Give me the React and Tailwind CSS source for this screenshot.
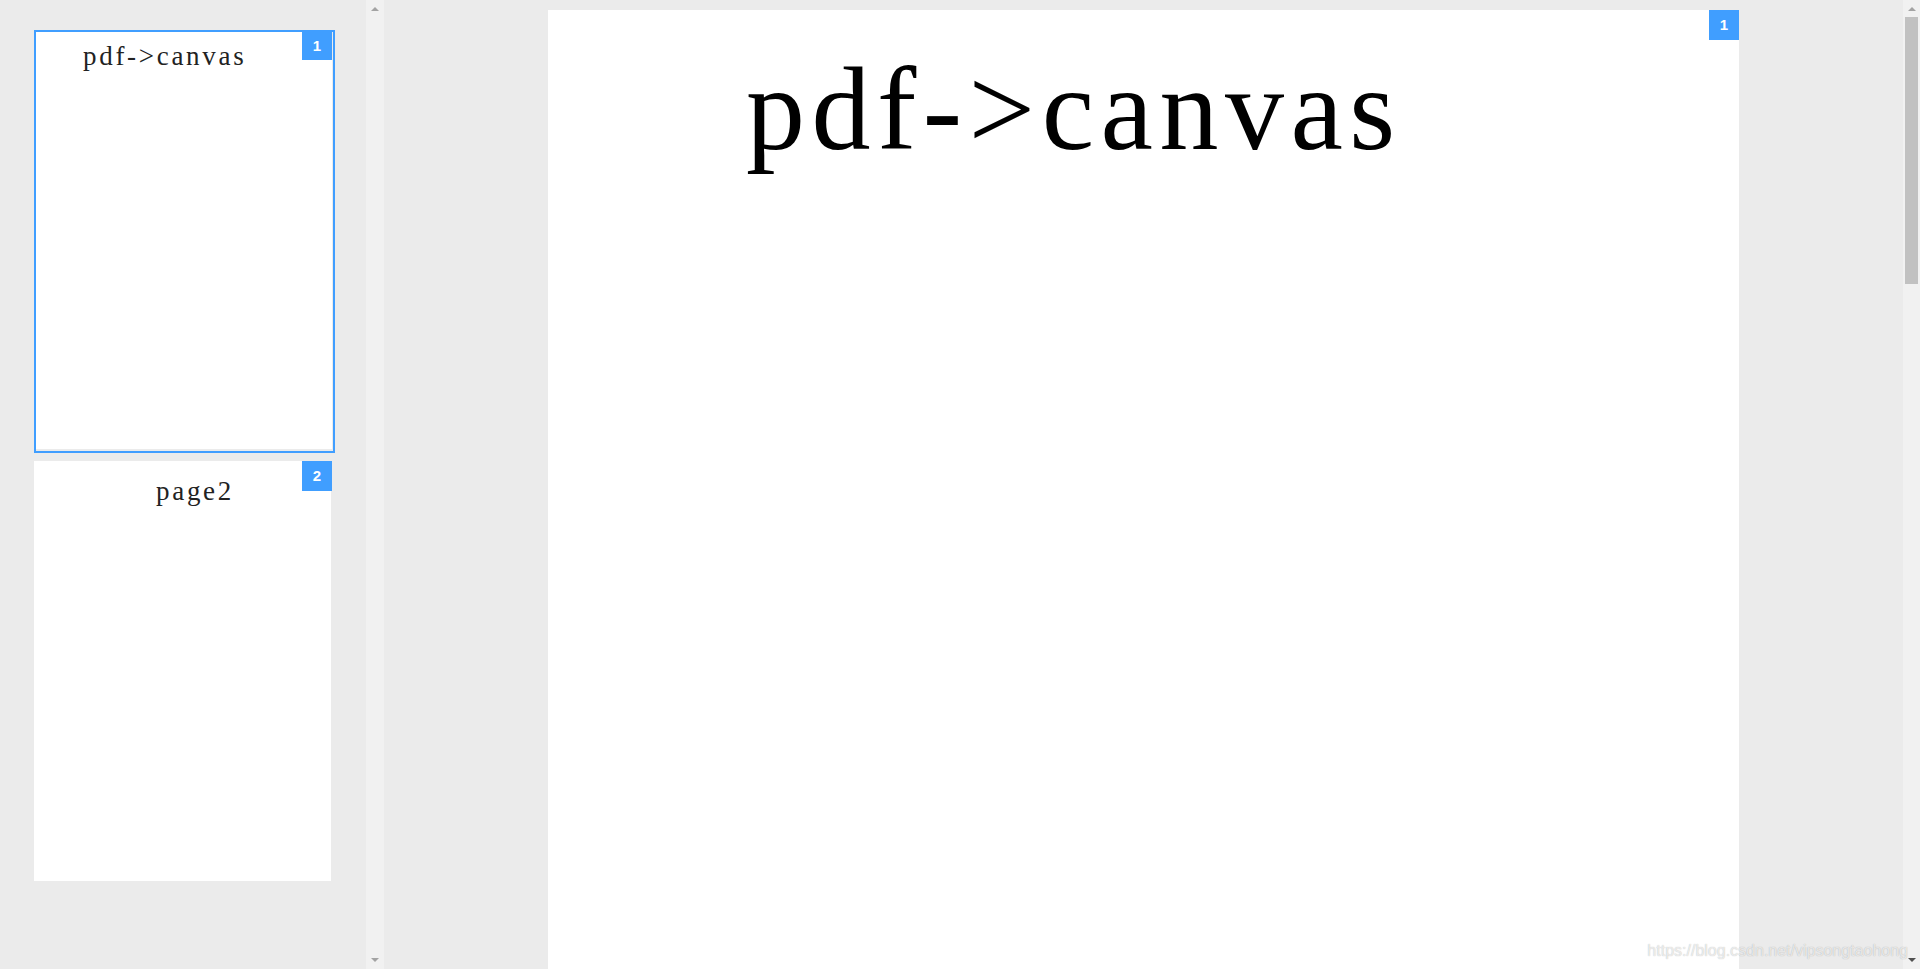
import React from 'react';

const serif = "font-['Liberation_Serif','Times_New_Roman',serif]";
const sans = "font-['Liberation_Sans',Arial,sans-serif]";

function ArrowUp({ dark }) {
  return (
    <div
      className={`w-0 h-0 border-x-[4px] border-x-transparent border-b-[4px] ${
        dark ? 'border-b-[#505050]' : 'border-b-[#a3a3a3]'
      }`}
    />
  );
}

function ArrowDown({ dark }) {
  return (
    <div
      className={`w-0 h-0 border-x-[4px] border-x-transparent border-t-[4px] ${
        dark ? 'border-t-[#505050]' : 'border-t-[#a3a3a3]'
      }`}
    />
  );
}

export default function App() {
  return (
    <div className="relative h-screen w-full flex bg-[#ebebeb] overflow-hidden">
      {/* thumbnails */}
      <div className="w-[384px] shrink-0 flex">
        <div className="w-[366px] flex flex-col gap-[8px] pt-[30px] pl-[34px]">
          <div className="relative w-[301px] h-[423px] border-2 border-[#409eff] bg-[#ebebeb]">
            <div className="w-[296px] h-[417px] bg-white pt-[11px] pl-[47px]">
              <div className={`${serif} text-[27px] leading-none tracking-[2.7px] text-[#222]`}>
                pdf-&gt;canvas
              </div>
            </div>
            <div className={`absolute right-[1px] top-0 w-[30px] h-[28px] bg-[#409eff] text-white text-[15px] font-bold flex items-center justify-center ${sans}`}>
              1
            </div>
          </div>
          <div className="relative w-[297px] h-[420px] bg-white pt-[17px] pl-[122px]">
            <div className={`${serif} text-[27px] leading-none tracking-[2.7px] text-[#222]`}>
              page2
            </div>
            <div className={`absolute right-[-1px] top-0 w-[30px] h-[30px] bg-[#409eff] text-white text-[15px] font-bold flex items-center justify-center ${sans}`}>
              2
            </div>
          </div>
        </div>
        <div className="w-[18px] bg-[#f1f1f1] flex flex-col items-center justify-between pt-[7px] pb-[7px]">
          <ArrowUp />
          <ArrowDown />
        </div>
      </div>

      {/* main view */}
      <div className="flex-1 flex">
        <div className="flex-1 flex justify-center pt-[10px]">
          <div className="relative w-[1191px] h-[1400px] shrink-0 bg-white pt-[41px] pl-[198px]">
            <div className={`${serif} text-[118px] leading-none tracking-[6.5px] text-black whitespace-nowrap`}>
              pdf-&gt;canvas
            </div>
            <div className={`absolute right-0 top-0 w-[30px] h-[30px] bg-[#409eff] text-white text-[15px] font-bold flex items-center justify-center ${sans}`}>
              1
            </div>
          </div>
        </div>
        <div className="w-[17px] bg-[#f1f1f1] flex flex-col items-center pt-[7px] pb-[7px]">
          <ArrowUp />
          <div className="mt-[6px] w-[13px] h-[267px] bg-[#c1c1c1]" />
          <div className="flex-1" />
          <ArrowDown dark />
        </div>
      </div>

      <div className={`absolute right-[12px] bottom-[10px] text-[16px] leading-4 ${sans} text-white/70 [text-shadow:0_0_1px_rgba(0,0,0,0.3)]`}>
        https://blog.csdn.net/vipsongtaohong
      </div>
    </div>
  );
}
